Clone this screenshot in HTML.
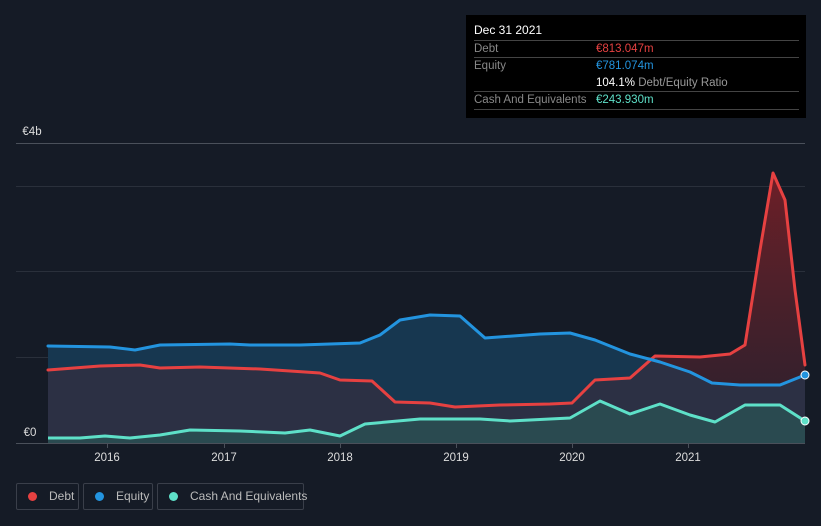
<!DOCTYPE html>
<html><head><style>
body{margin:0;width:821px;height:526px;background:#151b26;font-family:"Liberation Sans",sans-serif;overflow:hidden;position:relative}
.tt{position:absolute;left:466px;top:15px;width:340px;height:103px;background:#000;font-size:11.5px}
.row{position:absolute;left:8px;width:325px;border-top:1px solid #444}
.lab{position:absolute;left:8px;color:#888}
.val{position:absolute;left:130px}
.leg{position:absolute;top:483px;height:27px;border:1px solid #3a3f4a;border-radius:2px;color:#bbb;font-size:12px;line-height:25px;box-sizing:border-box;white-space:nowrap}
.dot{display:inline-block;width:9px;height:9px;border-radius:50%;margin:0 12px 0 11px;vertical-align:-1px}
</style></head><body>
<svg width="821" height="526" style="position:absolute;left:0;top:0">
<defs>
<linearGradient id="gd" x1="0" y1="0" x2="0" y2="1"><stop offset="0" stop-color="#7a1c22" stop-opacity=".85"/><stop offset="1" stop-color="#3a1a22" stop-opacity=".7"/></linearGradient>
</defs>
<g stroke="#2a303b" stroke-width="1">
<line x1="16" y1="143.5" x2="805" y2="143.5" stroke="#4a505a"/>
<line x1="16" y1="186.5" x2="805" y2="186.5"/>
<line x1="16" y1="271.5" x2="805" y2="271.5"/>
<line x1="16" y1="357.5" x2="805" y2="357.5"/>
</g>
<path d="M48,346 L110,347 L135,350 L160,345 L230,344 L250,345 L300,345 L360,343 L380,335 L400,320 L430,315 L460,316 L485,338 L540,334 L570,333 L595,340 L630,354 L660,362 L690,372 L712,383 L740,385 L780,385 L805,375 L805,443 L48,443Z" fill="#173750"/>
<path d="M48,370 L100,366 L140,365 L160,368 L200,367 L260,369 L290,371 L320,373 L340,380 L372,381 L395,402 L430,403 L455,407 L500,405 L550,404 L572,403 L595,380 L630,378 L655,356 L700,357 L730,354 L745,345 L760,250 L773,173 L785,200 L795,290 L805,365 L805,443 L48,443Z" fill="#2c3044"/>
<path d="M655,356 L700,357 L730,354 L745,345 L760,250 L773,173 L785,200 L795,290 L805,365 L805,375 L780,385 L740,385 L712,383 L690,372 L660,362Z" fill="url(#gd)"/>
<path d="M48,438 L80,438 L105,436 L130,438 L160,435 L190,430 L240,431 L285,433 L310,430 L340,436 L365,424 L420,419 L480,419 L510,421 L570,418 L600,401 L630,414 L660,404 L690,415 L715,422 L745,405 L780,405 L805,421 L805,443 L48,443Z" fill="#2a4a50"/>
<g fill="none" stroke-width="3" stroke-linejoin="round" stroke-linecap="round">
<path d="M48,370 L100,366 L140,365 L160,368 L200,367 L260,369 L290,371 L320,373 L340,380 L372,381 L395,402 L430,403 L455,407 L500,405 L550,404 L572,403 L595,380 L630,378 L655,356 L700,357 L730,354 L745,345 L760,250 L773,173 L785,200 L795,290 L805,365" stroke="#e64141"/>
<path d="M48,346 L110,347 L135,350 L160,345 L230,344 L250,345 L300,345 L360,343 L380,335 L400,320 L430,315 L460,316 L485,338 L540,334 L570,333 L595,340 L630,354 L660,362 L690,372 L712,383 L740,385 L780,385 L805,375" stroke="#2394df"/>
<path d="M48,438 L80,438 L105,436 L130,438 L160,435 L190,430 L240,431 L285,433 L310,430 L340,436 L365,424 L420,419 L480,419 L510,421 L570,418 L600,401 L630,414 L660,404 L690,415 L715,422 L745,405 L780,405 L805,421" stroke="#5ee0c8"/>
</g>
<circle cx="805" cy="375" r="4" fill="#2394df" stroke="#fff" stroke-width="1"/>
<circle cx="805" cy="421" r="4" fill="#5ee0c8" stroke="#fff" stroke-width="1"/>
<line x1="16" y1="443.5" x2="805" y2="443.5" stroke="#4a505a"/>
<g stroke="#4a505a"><line x1="107.5" y1="443" x2="107.5" y2="448"/><line x1="224.5" y1="443" x2="224.5" y2="448"/><line x1="340.5" y1="443" x2="340.5" y2="448"/><line x1="456.5" y1="443" x2="456.5" y2="448"/><line x1="572.5" y1="443" x2="572.5" y2="448"/><line x1="688.5" y1="443" x2="688.5" y2="448"/></g>
<rect x="16" y="421" width="32" height="22" fill="#151b26"/>
<g fill="#ddd" font-size="11.5" font-family="Liberation Sans" text-anchor="middle">
<text x="107" y="461">2016</text><text x="224" y="461">2017</text><text x="340" y="461">2018</text><text x="456" y="461">2019</text><text x="572" y="461">2020</text><text x="688" y="461">2021</text>
<text x="32" y="135">€4b</text><text x="30" y="436">€0</text>
</g>
</svg>
<div class="tt">
<div style="position:absolute;left:8px;top:8px;color:#fff;font-size:12px">Dec 31 2021</div>
<div class="row" style="top:25px"></div>
<div class="lab" style="top:28px">Debt</div><div class="val" style="top:28px;color:#e64141">€813.047m</div>
<div class="row" style="top:42px"></div>
<div class="lab" style="top:45px">Equity</div><div class="val" style="top:45px;color:#2394df">€781.074m</div>
<div class="val" style="top:62px;color:#fff">104.1% <span style="color:#999">Debt/Equity Ratio</span></div>
<div class="row" style="top:76px"></div>
<div class="lab" style="top:79px">Cash And Equivalents</div><div class="val" style="top:79px;color:#5ee0c8">€243.930m</div>
<div class="row" style="top:94px"></div>
</div>
<div class="leg" style="left:16px;width:63px"><span class="dot" style="background:#e64141"></span>Debt</div>
<div class="leg" style="left:83px;width:70px"><span class="dot" style="background:#2394df"></span>Equity</div>
<div class="leg" style="left:157px;width:147px"><span class="dot" style="background:#5ee0c8"></span>Cash And Equivalents</div>
</body></html>
